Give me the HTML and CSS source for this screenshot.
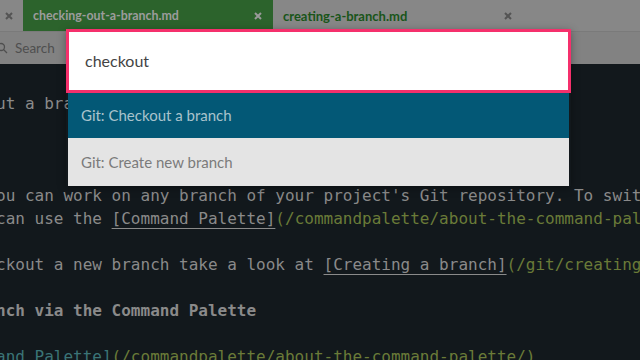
FILE: index.html
```html
<!DOCTYPE html>
<html lang="en">
<head>
    <meta charset="UTF-8">
    <title>checking-out-a-branch.md</title>
    <link rel="stylesheet" href="styles.css">
</head>
<body>
    <div class="tabs">
        <div class="tab tab-cut">
            <svg class="close" viewBox="0 0 8 8"><path d="M1 1L7 7M7 1L1 7"/></svg>
        </div>
        <div class="tab active">
            <span class="title">checking-out-a-branch.md</span>
            <svg class="close" viewBox="0 0 8 8"><path d="M1 1L7 7M7 1L1 7"/></svg>
        </div>
        <div class="tab">
            <span class="title">creating-a-branch.md</span>
            <svg class="close" viewBox="0 0 8 8"><path d="M1 1L7 7M7 1L1 7"/></svg>
        </div>
    </div>

    <div class="toolbar">
        <svg class="search-icon" viewBox="0 0 12 12"><circle cx="5" cy="5" r="3.5"/><path d="M7.5 7.5L11 11"/></svg>
        <span>Search</span>
    </div>

    <div class="editor">
        <div class="line">ut a bra</div>
        <div class="line"></div>
        <div class="line"></div>
        <div class="line"></div>
        <div class="line">ou can work on any branch of your project's Git repository. To swit</div>
        <div class="line">can use the <span class="link">[Command Palette]</span><span class="url">(/commandpalette/about-the-command-pal</span></div>
        <div class="line"></div>
        <div class="line">ckout a new branch take a look at <span class="link">[Creating a branch]</span><span class="url">(/git/creating</span></div>
        <div class="line"></div>
        <div class="line heading">nch via the Command Palette</div>
        <div class="line"></div>
        <div class="line"><span class="ref">and Palette]</span><span class="url">(/commandpalette/about-the-command-palette/)</span></div>
    </div>

    <!-- command palette over the editor -->
    <div class="palette">
        <div class="palette-input">checkout</div>
        <ul class="palette-list">
            <li class="selected">Git: Checkout a branch</li>
            <li>Git: Create new branch</li>
        </ul>
    </div>
</body>
</html>
```

FILE: styles.css
```css
body {
    margin: 0;
    width: 640px;
    height: 360px;
    overflow: hidden;
    background-color: #12181c;
    font-family: Lato, "Open Sans", sans-serif;
    position: relative;
}
.tabs {
    display: flex;
    height: 31px;
    background: #878787;
    border-bottom: 1px solid #7a7a7a;
}
.tab {
    display: flex;
    align-items: center;
    width: 250px;
    padding: 0 10px;
    box-sizing: border-box;
}
.tab-cut {
    width: 23px;
    padding: 0 0 0 5px;
}
.tab.active {
    background: #2c632c;
}
.title {
    flex: 1;
    font-size: 13px;
    font-weight: bold;
    color: #195519;
}
.tab.active .title {
    font-size: 12.4px;
    color: #9c9c9c;
}
.close {
    width: 8px;
    height: 8px;
    margin-right: 1px;
    fill: none;
    stroke: #545454;
    stroke-width: 2;
}
.tab.active .close {
    stroke: #9a9a9a;
}
.toolbar {
    display: flex;
    align-items: center;
    gap: 7px;
    height: 32px;
    margin-left: -4px;
    background: #828282;
    font-size: 13.5px;
    color: #4f4f4f;
}
.search-icon {
    width: 12px;
    height: 12px;
    fill: none;
    stroke: #4f4f4f;
    stroke-width: 1.3;
}
.editor {
    padding-top: 28px;
    margin-left: -4px;
    font-family: "DejaVu Sans Mono", monospace;
    font-size: 16px;
    color: #8a8a8a;
}
.line {
    height: 23px;
    line-height: 23px;
    white-space: pre;
}
.heading {
    font-weight: bold;
}
.link {
    text-decoration: underline;
    text-underline-offset: 4px;
    text-decoration-thickness: 1px;
}
.url {
    color: #6a7b38;
}
.ref {
    color: #3b7476;
}
.palette {
    position: absolute;
    left: 66px;
    top: 29px;
    width: 505px;
    box-shadow: 0 2px 8px rgba(0,0,0,0.35);
}
.palette-input {
    height: 58px;
    line-height: 58px;
    padding-left: 16px;
    background: white;
    border: 3px solid #f5306c;
    font-size: 16px;
    color: #444;
}
.palette-list {
    list-style: none;
    margin: 0 2px;
    padding: 0;
}
.palette-list li {
    height: 48px;
    line-height: 48px;
    padding-left: 13px;
    background: #e4e4e4;
    font-size: 15px;
    color: #7b7b7b;
}
.palette-list li.selected {
    height: 45px;
    line-height: 45px;
    background: #035876;
    color: #a9c3cc;
}
```
